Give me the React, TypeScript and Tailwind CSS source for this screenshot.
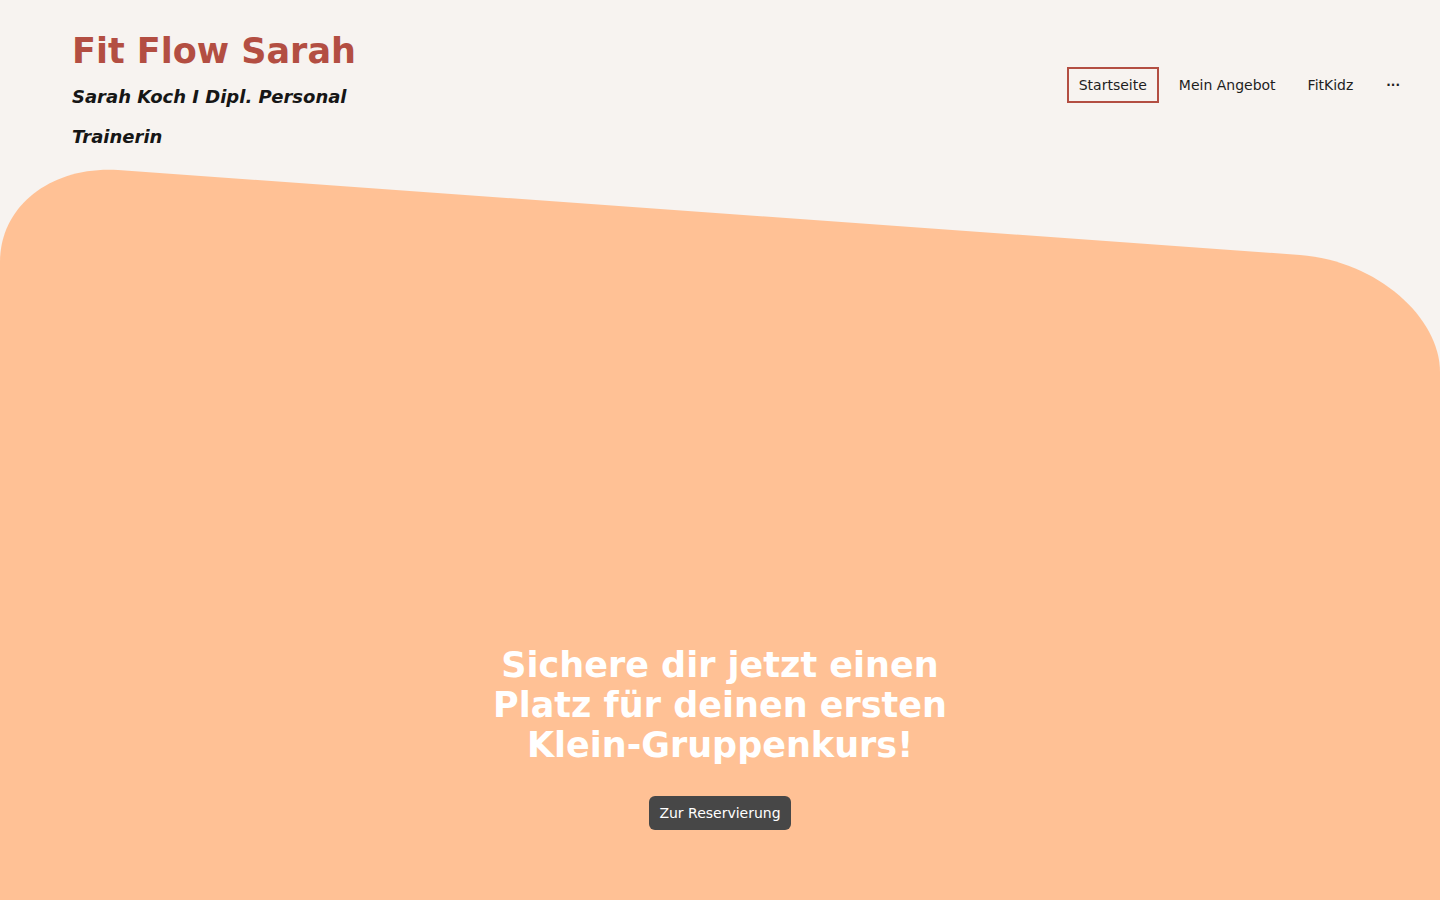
import React from 'react';

const NAV = ['Startseite', 'Mein Angebot', 'FitKidz'];

function HeroShape() {
  return (
    <svg
      className="absolute inset-0 h-full w-full"
      viewBox="0 0 1440 900"
      preserveAspectRatio="none"
      aria-hidden
    >
      <path
        d="M0,900 L0,262 C0,205 52,166 118,170 L1300,255 C1378,261 1440,318 1440,372 L1440,900 Z"
        fill="#ffc195"
      />
    </svg>
  );
}

export default function App() {
  return (
    <div
      className="relative h-[900px] w-[1440px] overflow-hidden bg-[#f7f3f0]"
      style={{ fontFamily: '"DejaVu Sans", Verdana, sans-serif' }}
    >
      <HeroShape />

      <header className="relative flex items-start justify-between pl-[72px] pr-[40px] pt-[30px]">
        <div className="w-[300px]">
          <h1 className="text-[35px] font-bold leading-[42px] text-[#b34e42]">Fit Flow Sarah</h1>
          <p className="mt-[5px] text-[18px] font-bold italic leading-[40px] text-[#161616]">
            Sarah Koch I Dipl. Personal Trainerin
          </p>
        </div>

        <nav className="mt-[37px] flex items-center gap-[8px] text-[14px] leading-[20px] text-[#1e1e1e]">
          {NAV.map((item, i) => (
            <a
              key={item}
              className={
                i === 0
                  ? 'border-2 border-[#b34e42] px-[10px] py-[6px]'
                  : 'border-2 border-transparent px-[10px] py-[6px]'
              }
            >
              {item}
            </a>
          ))}
          <span className="py-[6px] pl-[13px] text-[12px] font-bold">···</span>
        </nav>
      </header>

      <section className="relative mt-[488px] flex flex-col items-center">
        <h2 className="w-[520px] text-center text-[35px] font-bold leading-[40px] text-white">
          Sichere dir jetzt einen Platz für deinen ersten Klein-Gruppenkurs!
        </h2>
        <button className="mt-[31px] rounded-[6px] bg-[#474747] px-[10px] py-[7px] text-[14px] leading-[20px] text-white">
          Zur Reservierung
        </button>
      </section>
    </div>
  );
}
